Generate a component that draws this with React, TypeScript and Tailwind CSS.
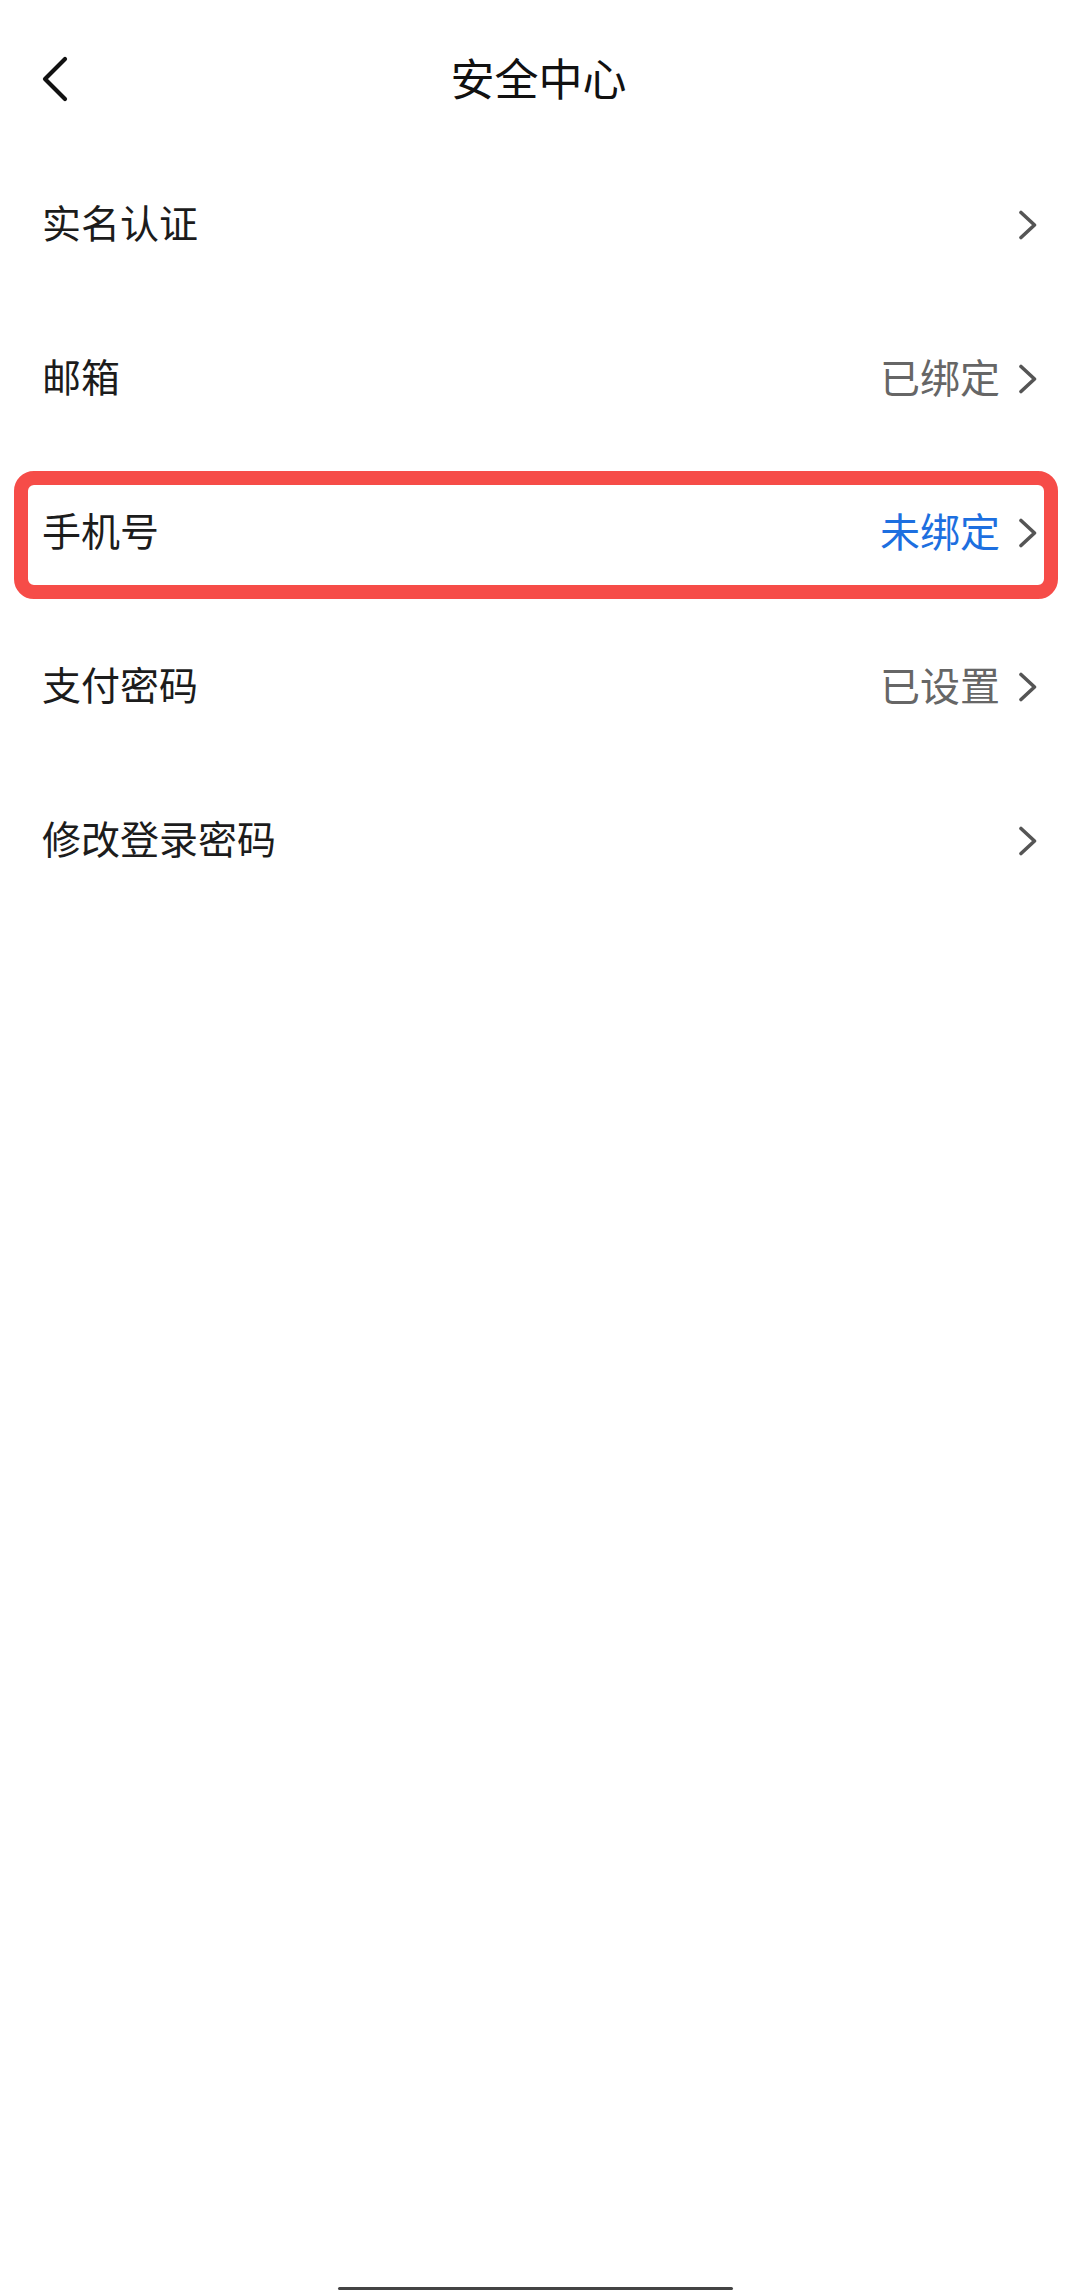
import React from 'react';

interface Item {
  label: string;
  value?: string;
  tone?: 'gray' | 'blue';
  highlight?: boolean;
}

const items: Item[] = [
  { label: '实名认证' },
  { label: '邮箱', value: '已绑定', tone: 'gray' },
  { label: '手机号', value: '未绑定', tone: 'blue', highlight: true },
  { label: '支付密码', value: '已设置', tone: 'gray' },
  { label: '修改登录密码' },
];

const ChevronRight = () => (
  <svg viewBox="0 0 20 30" className="w-[20px] h-[30px] shrink-0" fill="none">
    <path d="M3 2.5 L16.5 15 L3 27.5" stroke="#555555" strokeWidth="3.6" strokeLinecap="round" strokeLinejoin="round" />
  </svg>
);

const ChevronLeft = () => (
  <svg viewBox="0 0 28 46" className="w-[28px] h-[46px]" fill="none">
    <path d="M25 3 L5 23 L25 43" stroke="#111111" strokeWidth="4.2" strokeLinecap="round" strokeLinejoin="round" />
  </svg>
);

const Row: React.FC<{ item: Item }> = ({ item }) => (
  <div className="relative h-[154px] flex items-center pl-[42px] pr-[39px]">
    <span className="flex-1 mb-[7px] text-[39px] leading-none text-[#1c1c1c]">{item.label}</span>
    {item.value && (
      <span
        className={
          item.tone === 'blue'
            ? 'mb-[7px] text-[40px] leading-none text-[#1d6fe0] mr-[18px]'
            : 'mb-[7px] text-[40px] leading-none text-[#666666] mr-[18px]'
        }
      >
        {item.value}
      </span>
    )}
    <ChevronRight />
    {item.highlight && (
      <div className="absolute left-[14px] right-[19px] top-[15px] bottom-[11px] border-[14px] border-[#f64c48] rounded-[20px] pointer-events-none" />
    )}
  </div>
);

export default function App() {
  return (
    <div className="w-full h-[2290px] bg-white flex flex-col overflow-hidden font-['Noto_Sans_CJK_SC',sans-serif]">
      {/* Header */}
      <div className="h-[148px] pt-[10px] grid grid-cols-[1fr_auto_1fr] items-center">
        <div className="pl-[40px] flex items-center">
          <ChevronLeft />
        </div>
        <h1 className="mb-[5px] text-[44px] leading-none font-normal text-[#111111]">安全中心</h1>
        <div />
      </div>

      {/* List */}
      <div className="flex flex-col">
        {items.map(item => (
          <Row key={item.label} item={item} />
        ))}
      </div>

      {/* Home indicator */}
      <div className="mt-auto pl-[338px]">
        <div className="w-[395px] h-[3px] bg-[#444444] rounded-full" />
      </div>
    </div>
  );
}
